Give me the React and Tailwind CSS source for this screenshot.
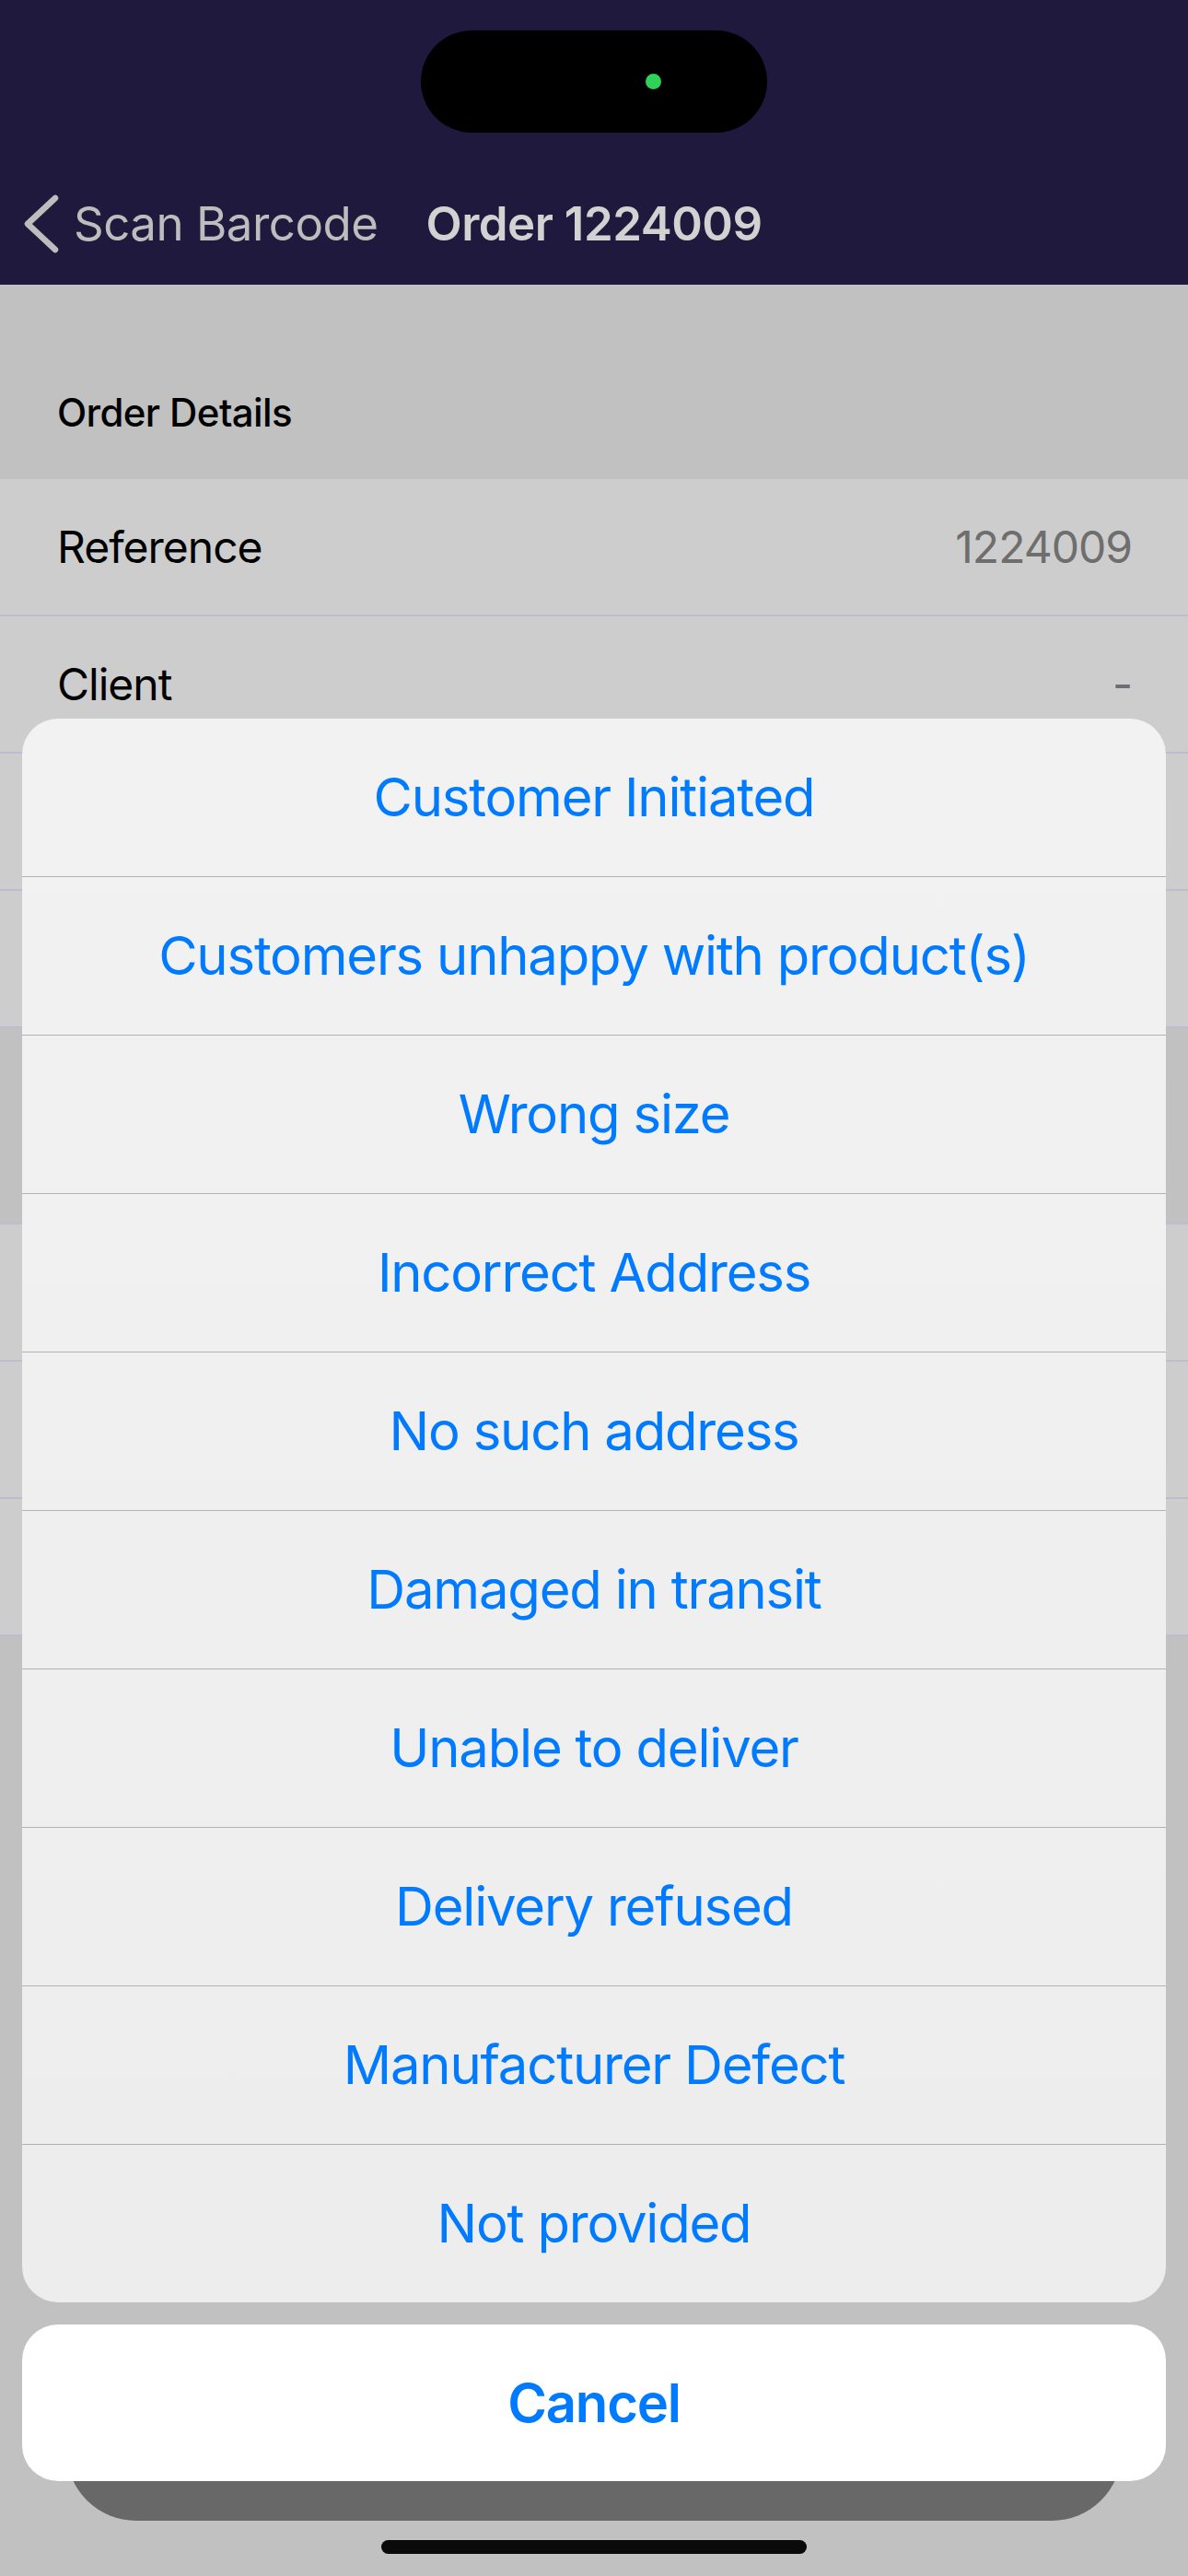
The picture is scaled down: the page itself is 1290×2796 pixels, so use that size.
import React from "react";

const reasons = [
  "Customer Initiated",
  "Customers unhappy with product(s)",
  "Wrong size",
  "Incorrect Address",
  "No such address",
  "Damaged in transit",
  "Unable to deliver",
  "Delivery refused",
  "Manufacturer Defect",
  "Not provided",
];

function Row({ label, value }) {
  return (
    <>
      <div className="h-[147px] bg-[#cdcdcd] flex items-center justify-between pl-[62px] pr-[61px]">
        <span className="text-[48px] text-black tracking-[-1px]">{label}</span>
        <span className="text-[48px] text-[#6e6e6e] tracking-[-1px]">{value}</span>
      </div>
      <div className="h-[2px] bg-[#bebccf]" />
    </>
  );
}

export default function App() {
  return (
    <div
      className="relative w-[1290px] h-[2796px] overflow-hidden bg-[#c1c1c1] flex flex-col"
      style={{ fontFamily: "Inter, 'Liberation Sans', sans-serif" }}
    >
      {/* Status bar + nav */}
      <div className="bg-[#1e193d] h-[309px] flex flex-col shrink-0">
        <div className="h-[177px] flex justify-center pt-[33px]">
          <div className="w-[376px] h-[111px] rounded-full bg-black flex items-center pl-[244px]">
            <div className="w-[17px] h-[17px] rounded-full bg-[#2fd158]" />
          </div>
        </div>
        <div className="h-[132px] grid grid-cols-[1fr_auto_1fr] items-center">
          <div className="flex items-center pl-[25px] gap-[15px]">
            <svg width="40" height="64" viewBox="0 0 40 64" className="shrink-0">
              <polyline
                points="35,4 5,32 35,60"
                fill="none"
                stroke="#bdbdbd"
                strokeWidth="6.5"
                strokeLinecap="round"
                strokeLinejoin="round"
              />
            </svg>
            <span className="text-[51px] text-[#bdbdbd] tracking-[-0.5px]">Scan Barcode</span>
          </div>
          <div className="text-[51px] font-semibold text-[#d2d2d2] tracking-[-0.5px]">Order 1224009</div>
          <div />
        </div>
      </div>

      {/* Background content */}
      <div className="h-[211px] flex items-end pl-[62px] pb-[51px] shrink-0">
        <span className="text-[42px] leading-none font-medium text-black tracking-[-0.6px]">Order Details</span>
      </div>
      <Row label="Reference" value="1224009" />
      <Row label="Client" value="-" />
      <Row label="" value="" />
      <Row label="" value="" />
      <div className="h-[211px] shrink-0" />
      <div className="h-[2px] bg-[#bebccf]" />
      <Row label="" value="" />
      <Row label="" value="" />
      <Row label="" value="" />
      <div className="flex-1" />
      <div className="mx-[72px] mb-[60px] h-[176px] rounded-[76px] bg-[#686868] shrink-0" />

      {/* Action sheet overlay */}
      <div className="absolute left-[24px] right-[24px] bottom-[103px] flex flex-col gap-[24px]">
        <div className="rounded-[39px] overflow-hidden bg-gradient-to-b from-[#f2f2f2] to-[#ededed]">
          {reasons.map((r, i) => (
            <div key={r}>
              {i > 0 && <div className="h-px bg-[#b2b2b2]" />}
              <div className="h-[171px] flex items-center justify-center text-[58px] text-[#007aff] tracking-[-1.2px]">
                {r}
              </div>
            </div>
          ))}
        </div>
        <div className="h-[170px] rounded-[39px] bg-white flex items-center justify-center text-[58px] font-semibold text-[#007aff] tracking-[-1.2px]">
          Cancel
        </div>
      </div>

      {/* Home indicator */}
      <div className="absolute left-[414px] top-[2757px] w-[462px] h-[15px] rounded-full bg-[#0a0a0a]" />
    </div>
  );
}
